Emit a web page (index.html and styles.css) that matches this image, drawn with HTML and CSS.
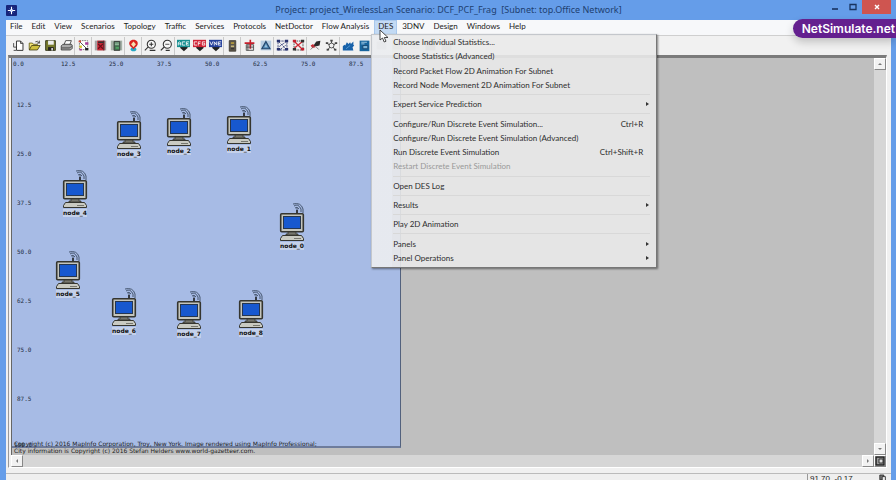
FILE: index.html
```html
<!DOCTYPE html>
<html lang="en">
<head>
<meta charset="utf-8">
<title>Project: project_WirelessLan Scenario: DCF_PCF_Frag [Subnet: top.Office Network]</title>
<link rel="stylesheet" href="styles.css">
</head>
<body>
<svg class="defs" aria-hidden="true">
  <symbol id="pc" viewBox="0 0 26 39">
    <path d="M18 11V5M16 5q2-2 4 1M15 3q4-3 7 3v3M14 1q8-2 10 5v4" fill="none" stroke="#46566f" stroke-width="1"/>
    <path d="M18 11V7" stroke="#222" stroke-width="1.5"/>
    <rect x="1.7" y="10.7" width="22.6" height="18" rx="1" fill="#c4c5bd" stroke="#35352f" stroke-width="1.6"/>
    <rect x="4.5" y="13.5" width="17" height="12" fill="#1758cf" stroke="#26364f"/>
    <path d="M9 29h8v2h2v1H7v-1h2z" fill="#77776f" stroke="#35352f" stroke-width=".8"/>
    <path d="M3.5 32.5h19l2 3v2H1.500v-2z" fill="#c9cac2" stroke="#35352f"/>
    <path d="M15 35.500h7" stroke="#77776f"/>
  </symbol>
</svg>
<div class="window">
  <header class="titlebar">
    <svg class="app-icon" viewBox="0 0 12 12"><rect width="12" height="12" rx="1" fill="#17257a"/><path d="M6 2v8M2 6h8" stroke="#fff" stroke-width="1.2"/><path d="M4 4l4 4M8 4L4 8" stroke="#9fb8f5" stroke-width=".8"/></svg>
    <h1>Project: project_WirelessLan Scenario: DCF_PCF_Frag&nbsp; [Subnet: top.Office Network]</h1>
    <div class="controls">
      <button aria-label="Minimize"><svg viewBox="0 0 10 10"><path d="M2 7h6" stroke="#18335f" stroke-width="1.600"/></svg></button>
      <button aria-label="Maximize"><svg viewBox="0 0 10 10"><path d="M2 2.500h6v5H2z" fill="none" stroke="#18335f" stroke-width="1.300"/></svg></button>
      <button class="close" aria-label="Close"><svg viewBox="0 0 10 10"><path d="M3 3l4 4M7 3L3 7" stroke="#fff" stroke-width="1.400"/></svg></button>
    </div>
  </header>

  <div class="client">
    <nav class="menubar">
      <button>File</button><button>Edit</button><button>View</button><button>Scenarios</button><button>Topology</button><button>Traffic</button><button>Services</button><button>Protocols</button><button>NetDoctor</button><button>Flow Analysis</button>
      <div class="menu-anchor">
        <button class="open" aria-expanded="true">DES</button>
        <div class="menu" role="menu">
          <button role="menuitem">Choose Individual Statistics...</button>
          <button role="menuitem">Choose Statistics (Advanced)</button>
          <button role="menuitem">Record Packet Flow 2D Animation For Subnet</button>
          <button role="menuitem">Record Node Movement 2D Animation For Subnet</button>
          <hr>
          <button role="menuitem" class="sub">Expert Service Prediction</button>
          <hr>
          <button role="menuitem">Configure/Run Discrete Event Simulation...<kbd>Ctrl+R</kbd></button>
          <button role="menuitem">Configure/Run Discrete Event Simulation (Advanced)</button>
          <button role="menuitem">Run Discrete Event Simulation<kbd>Ctrl+Shift+R</kbd></button>
          <button role="menuitem" disabled>Restart Discrete Event Simulation</button>
          <hr>
          <button role="menuitem">Open DES Log</button>
          <hr>
          <button role="menuitem" class="sub">Results</button>
          <hr>
          <button role="menuitem">Play 2D Animation</button>
          <hr>
          <button role="menuitem" class="sub">Panels</button>
          <button role="menuitem" class="sub">Panel Operations</button>
        </div>
        <svg class="cursor" viewBox="0 0 10 14"><path d="M1 1v10l2.500-2 1.700 4 1.800-.8-1.700-3.700H9z" fill="#fff" stroke="#333" stroke-width=".9"/></svg>
      </div>
      <button>3DNV</button><button>Design</button><button>Windows</button><button>Help</button>
    </nav>

    <div class="toolbar">
      <div class="group">
        <button aria-label="New"><svg viewBox="0 0 16 16"><path d="M5.500 2.500h5l3 3v8.500h-8z" fill="#fff" stroke="#333" stroke-width="1.200"/><path d="M10.500 2.500v3h3" fill="none" stroke="#333"/><path d="M2 5v5h4M2 14h3" fill="none" stroke="#333"/></svg></button>
        <button aria-label="Open"><svg viewBox="0 0 16 16"><path d="M1.500 13V5h4l1 1.500h5V8" fill="#f4e477" stroke="#5b5510"/><path d="M1.500 13.500l3-5.500h10.500l-3.500 5.500z" fill="#cfc13e" stroke="#3e3a10"/><path d="M9 3.500q3-2 5 1.500M14 2v3h-3" fill="none" stroke="#333"/></svg></button>
        <button aria-label="Save"><svg viewBox="0 0 16 16"><path d="M2 2h12v12H2z" fill="#777a2c" stroke="#25260e"/><path d="M5 2h7v5H5z" fill="#eee"/><path d="M5 10h7v4H5z" fill="#222"/><path d="M9 11h2v3H9z" fill="#ddd"/></svg></button>
        <button aria-label="Print"><svg viewBox="0 0 16 16"><path d="M5 7l2-5h7l-2 5" fill="#fff" stroke="#333"/><path d="M1.500 8.500l2-2h10.500l1 1v4l-2 2H1.500z" fill="#aaa" stroke="#333"/><path d="M2 11h10l2-2" fill="none" stroke="#333"/></svg></button>
      </div>
      <div class="group">
        <button aria-label="Object palette"><svg viewBox="0 0 16 16"><path d="M3 2h10v3M3 2v11h10V5" fill="#fff" stroke="#666" stroke-dasharray="2 1"/><path d="M3 3l10 10" stroke="#333"/><path d="M3 8h3v3H3z" fill="#d8c928"/><path d="M10 4h4v3h-4zM3 12h3v2H3z" fill="#a83c97"/><path d="M10 11h4v3h-4z" fill="#222"/><path d="M2 2h3v2H2z" fill="#d43"/></svg></button>
      </div>
      <div class="group">
        <button aria-label="Fail node"><svg viewBox="0 0 16 16"><path d="M1 2h14v12H1z" fill="#a4a4a4"/><path d="M4 2h9v12H4z" fill="#ca2634"/><path d="M5 3h7v2H5z" fill="#333"/><path d="M5 6l6 6M11 6l-6 6" stroke="#6b0d19" stroke-width="1.500"/><path d="M12 2v12" stroke="#333"/></svg></button>
        <button aria-label="Recover node"><svg viewBox="0 0 16 16"><path d="M1 2h14v12H1z" fill="#a4b0a6"/><path d="M5 3h7v11H5z" fill="#42704f" stroke="#333"/><path d="M6 5h5M6 7h5" stroke="#b9d8c0"/><path d="M7 11h4" stroke="#5de078"/></svg></button>
      </div>
      <div class="group">
        <button aria-label="Locate"><svg viewBox="0 0 16 16"><ellipse cx="8" cy="12.500" rx="3.500" ry="2.500" fill="#24a7c4"/><path d="M8 1c4 0 6 3 5 6-1 3-4 3-5 6-1-3-4-3-5-6-1-3 1-6 5-6z" fill="#d9231f"/><path d="M8 3l3 3.500L8 10 5 6.500z" fill="#f4dfb0"/></svg></button>
      </div>
      <div class="group">
        <button aria-label="Zoom in"><svg viewBox="0 0 16 16"><circle cx="9" cy="6.500" r="5" fill="#f8f8f8" stroke="#333" stroke-width="1.300"/><path d="M6.500 6.500h5M9 4v5M5 10l-4 4M7 14h7" stroke="#333" stroke-width="1.300"/></svg></button>
        <button aria-label="Zoom out"><svg viewBox="0 0 16 16"><circle cx="9" cy="6.500" r="5" fill="#f8f8f8" stroke="#333" stroke-width="1.300"/><path d="M6.500 6.500h5" stroke="#333"/><path d="M5 10l-4 4M7 14h5" stroke="#333" stroke-width="1.600"/></svg></button>
      </div>
      <div class="group">
        <button aria-label="ACE"><svg viewBox="0 0 16 16"><path d="M4 9h9v2l-4.500 4L4 11z" fill="#222"/><rect y="1" width="16" height="9" fill="#168f91"/><path d="M1.500 8V4.500l1.500-1 1.500 1V8M1.500 6h3M10 3.500H6.500v4H10M15 3.500h-3.500v4H15M11.500 5.500H14" fill="none" stroke="#fff"/></svg></button>
        <button aria-label="CFG"><svg viewBox="0 0 16 16"><path d="M4 9h9v2l-4.500 4L4 11z" fill="#222"/><rect y="1" width="16" height="9" fill="#d02336"/><path d="M5 3.500H1.500v4H5M9.500 3.500h-3V8M6.500 5.500H9M15 3.500h-3.500v4H14.500v-2H13" fill="none" stroke="#fff"/></svg></button>
        <button aria-label="VNE"><svg viewBox="0 0 16 16"><path d="M4 9h9v2l-4.500 4L4 11z" fill="#222"/><rect y="1" width="16" height="9" fill="#25409b"/><path d="M1 3l2 4.500L5 3M6.500 8V3.500l3 4V3M15 3.500h-3.500v4H15M11.500 5.500H14" fill="none" stroke="#fff"/></svg></button>
      </div>
      <div class="group">
        <button aria-label="Server"><svg viewBox="0 0 16 16"><path d="M4 2h8v13H4z" fill="#5b554a" stroke="#3b382f"/><path d="M6 4h4v2H6z" fill="#b89e3c"/><path d="M6 8h4v2H6z" fill="#c4b57a"/><path d="M6 12h4" stroke="#222"/></svg></button>
      </div>
      <div class="group">
        <button aria-label="Compare"><svg viewBox="0 0 16 16"><path d="M4 7h9v7H4z" fill="#ddd" stroke="#444"/><path d="M2 4h12v2H2zM8 1h2v11H8z" fill="#c51f2b"/><path d="M4 10h9M6 7v7" stroke="#444"/></svg></button>
        <button aria-label="Topology view"><svg viewBox="0 0 16 16"><path d="M2 2h13v12H2z" fill="#b7cce1"/><path d="M8.500 3l5 9h-10z" fill="#4d86b4" stroke="#24466b" stroke-width="1.400"/><path d="M8.500 6l2 4h-4z" fill="#9cc0dc"/></svg></button>
      </div>
      <div class="group">
        <button aria-label="Select links"><svg viewBox="0 0 16 16"><path d="M2.500 2.500h11v11h-11zM3 3l10 10M13 3L3 10M5 13l8-6" fill="none" stroke="#333f76" stroke-dasharray="3 1"/><path d="M1 1h4v3H1zM11 1h4v3h-4zM1 11h4v3H1zM11 11h4v3h-4z" fill="#28336e"/></svg></button>
        <button aria-label="Clear links"><svg viewBox="0 0 16 16"><path d="M2.500 2.500h11v11h-11z" fill="none" stroke="#333" stroke-dasharray="2 1"/><path d="M3 3l10 10M13 3L3 11" stroke="#cf2934" stroke-width="1.600"/><path d="M1 1h4v3H1zM11 11h4v3h-4z" fill="#c3202f"/><path d="M11 1h4v3h-4zM1 11h4v3H1z" fill="#333"/></svg></button>
      </div>
      <div class="group">
        <button aria-label="Flow chart"><svg viewBox="0 0 16 16"><path d="M4 10l5-7 5-1-1 6-4 1z" fill="#292929"/><path d="M2 8l3-2 3 4-4 1z" fill="#c82d35"/><path d="M2 13l4-4M9 10l3 3" stroke="#666"/></svg></button>
        <button aria-label="Network ring"><svg viewBox="0 0 16 16"><circle cx="8" cy="8" r="3" fill="#eee" stroke="#333"/><path d="M8 5V2M5 7L2 5M11 7l3-2M6 10l-3 4M10 10l3 4" stroke="#333"/><path d="M6.500 1h3v2h-3zM1 4h3v2H1zM12 4h3v2h-3zM2 12h3v2H2zM11 12h3v2h-3z" fill="#444"/></svg></button>
      </div>
      <div class="group">
        <button aria-label="Run"><svg viewBox="0 0 16 16"><path d="M1 14V9l2-2 1 1 2-4 2 2 2-2 1 2 3-3v4l1 1-2 2 1 4z" fill="#1761a9"/><path d="M5 12l5-4" stroke="#59a0d8"/></svg></button>
        <button aria-label="Results"><svg viewBox="0 0 16 16"><path d="M2 2h12v13H2z" fill="#17649c"/><path d="M4 4h7M4 6h4" stroke="#b5d6ee"/><path d="M6 8h6v4H6z" fill="#7db6da" stroke="#123d66"/></svg></button>
      </div>
      <div class="group dim">
        <button aria-label="Log"><svg viewBox="0 0 16 16"><path d="M2 3h12v10H2z" fill="#999"/></svg></button>
        <button aria-label="Pause"><svg viewBox="0 0 16 16"><path d="M2 3h12v10H2z" fill="#bbb"/></svg></button>
      </div>
      <div class="group dim">
        <button aria-label="Hide"><svg viewBox="0 0 16 16"><path d="M3 3h11v9H3z" fill="#ccc"/></svg></button>
        <button aria-label="Panels"><svg viewBox="0 0 16 16"><path d="M2 2h12v12H2z" fill="#666"/></svg></button>
        <button aria-label="Arrange"><svg viewBox="0 0 16 16"><path d="M2 2h12v12H2z" fill="#777"/></svg></button>
      </div>
    </div>

    <main class="workspace">
      <section class="canvas" aria-label="Office Network">
        <div class="subnet">
          <div class="ruler-x"><span>0.0</span><span>12.5</span><span>25.0</span><span>37.5</span><span>50.0</span><span>62.5</span><span>75.0</span><span>87.5</span></div>
          <div class="ruler-y"><span>12.5</span><span>25.0</span><span>37.5</span><span>50.0</span><span>62.5</span><span>75.0</span><span>87.5</span></div>
          <span class="ruler-end">100.0</span>
          <div class="node n0"><svg><use href="#pc"/></svg><span>node_0</span></div>
          <div class="node n1"><svg><use href="#pc"/></svg><span>node_1</span></div>
          <div class="node n2"><svg><use href="#pc"/></svg><span>node_2</span></div>
          <div class="node n3"><svg><use href="#pc"/></svg><span>node_3</span></div>
          <div class="node n4"><svg><use href="#pc"/></svg><span>node_4</span></div>
          <div class="node n5"><svg><use href="#pc"/></svg><span>node_5</span></div>
          <div class="node n6"><svg><use href="#pc"/></svg><span>node_6</span></div>
          <div class="node n7"><svg><use href="#pc"/></svg><span>node_7</span></div>
          <div class="node n8"><svg><use href="#pc"/></svg><span>node_8</span></div>
          <p class="credits">Copyright (c) 2016 MapInfo Corporation, Troy, New York. Image rendered using MapInfo Professional;<br>City information is Copyright (c) 2016 Stefan Helders www.world-gazetteer.com.</p>
        </div>
      </section>
      <div class="scroll vertical">
        <button aria-label="Scroll up"><svg viewBox="0 0 10 10"><path d="M3 6l2-2 2 2z" fill="#777"/></svg></button>
        <button aria-label="Scroll down"><svg viewBox="0 0 10 10"><path d="M3 4l2 2 2-2z" fill="#777"/></svg></button>
      </div>
      <div class="scroll horizontal">
        <button aria-label="Scroll left"><svg viewBox="0 0 10 10"><path d="M6 3L4 5l2 2z" fill="#777"/></svg></button>
        <button aria-label="Scroll right"><svg viewBox="0 0 10 10"><path d="M4 3l2 2-2 2z" fill="#777"/></svg></button>
      </div>
      <button class="corner" aria-label="Overview"><svg viewBox="0 0 10 10"><path d="M1 1h8v8H1z" fill="#999" stroke="#222" stroke-width="1.500"/><path d="M4 3h4v4H4z" fill="#ddd" stroke="#333"/></svg></button>
    </main>

    <footer class="status">
      <span class="coords">91.70, -0.17</span>
      <svg class="status-icon" viewBox="0 0 10 12"><path d="M1 1h5v6H1z" fill="#777" stroke="#222"/><path d="M4 3h4v8H4z" fill="#eee" stroke="#222"/></svg>
    </footer>
  </div>
  <a class="badge" href="#">NetSimulate.net</a>
</div>
</body>
</html>
```
FILE: styles.css
```css
* { box-sizing: border-box; }

body {
  margin: 0;
  height: 100vh;
  overflow: hidden;
  font: 8px/13px Lato, "Liberation Sans", sans-serif;
  color: #222;
}

button {
  margin: 0;
  padding: 0;
  border: 0;
  background: none;
  font: inherit;
  color: inherit;
}

svg { display: block; }

.defs { position: absolute; width: 0; height: 0; }

/* The status bar runs past the lower edge of the screen. */
.window {
  position: relative;
  display: flex;
  flex-direction: column;
  height: calc(100vh + 6px);
  padding: 0 5px 0 6px;
  background: #659de9;
}

.titlebar {
  display: grid;
  grid-template-columns: 72px 1fr 72px;
  height: 20px;
  flex: none;
}

.app-icon { width: 11px; height: 11px; align-self: center; }

.titlebar h1 {
  margin: 0;
  font: 400 9px/20px "Noto Sans", "Open Sans", sans-serif;
  text-align: center;
  white-space: nowrap;
  color: #1e3f70;
}

.controls { display: flex; justify-content: flex-end; align-items: flex-start; }
.controls button { width: 18px; height: 14px; display: grid; place-items: center; }
.controls svg { width: 10px; height: 10px; }
.controls .close { width: 29px; background: #cf5550; }

.client {
  flex: 1;
  min-height: 0;
  display: flex;
  flex-direction: column;
  background: #f0f0f0;
}

.menubar {
  display: flex;
  align-items: flex-start;
  height: 15px;
  flex: none;
  gap: 1px;
  background: #f7f8fa;
}
.menubar button { padding: 0 4px; white-space: nowrap; color: #222; }
.menubar .open { display: block; padding-bottom: 2px; background: #c3daf4; box-shadow: inset 0 0 0 1px #a9c8ec; }

.menu-anchor { position: relative; }

.menu {
  position: absolute;
  z-index: 2;
  top: 14px;
  left: -3px;
  width: 286px;
  min-height: 234px;
  padding: 0 6px 2px 0;
  display: flex;
  flex-direction: column;
  border: 1px solid;
  border-color: #c4c7cc #777 #777 #c4c7cc;
  box-shadow: 1px 1px 2px #0007;
  background: linear-gradient(90deg, #edf2fb50 0 20px, transparent 20px), #eaeaeae4;
}
.menubar .menu button {
  position: relative;
  flex: 1;
  display: flex;
  align-items: center;
  justify-content: space-between;
  padding: 0 7px 0 21px;
  line-height: 10px;
  color: #2e2e2e;
}
.menubar .menu button:disabled { color: #999; }
.menu kbd { font: inherit; }
.menu .sub::after {
  content: "";
  position: absolute;
  right: 1px;
  border: 2px solid transparent;
  border-left: 3px solid #333;
  border-right: 0;
}
.menu hr {
  flex: none;
  width: calc(100% - 21px);
  height: 1px;
  margin: 2px 0 2px 21px;
  border: 0;
  background: #d8d8d8;
}

.cursor { position: absolute; z-index: 3; left: 5px; top: 9px; width: 10px; height: 14px; }

.toolbar {
  display: flex;
  height: 20px;
  flex: none;
  align-items: center;
  padding-left: 4px;
  border-top: 1px solid #cfcfcf;
  background: #f1f1f1;
}
.group { display: flex; border-right: 1px solid #c9c9c9; }
.group button { width: 16px; height: 18px; display: grid; place-items: center; }
.group svg { width: 13px; height: 13px; }
.dim { opacity: .6; border-color: transparent; }

.workspace {
  flex: 1;
  min-height: 0;
  margin: 0 4px 0 2px;
  padding-left: 2px;
  display: grid;
  grid-template-columns: 1fr 12px;
  grid-template-rows: 1fr 12px;
  border: solid;
  border-width: 3px 1px 1px 1px;
  border-color: #7b7b7b #fff #fff #999;
}

.canvas { min-width: 0; border-left: 1px solid #666; background: #bfbfbf; }

.subnet {
  position: relative;
  width: 389px;
  height: 390px;
  border-right: 1px solid #52617d;
  border-bottom: 2px solid #6e7c9c;
  background: #a7bbe5;
  font: 6px/8px "DejaVu Sans Mono", monospace;
  color: #222b40;
}

.ruler-x { display: flex; padding: 2px 0 0 1px; }
.ruler-x span { width: 48px; }
.ruler-y {
  display: flex;
  flex-direction: column;
  gap: 41px;
  padding: 33px 0 0 5px;
}
.ruler-end { position: absolute; left: 2px; bottom: -3px; }

.node {
  position: absolute;
  width: 26px;
  display: flex;
  flex-direction: column;
  align-items: center;
}
.node svg { width: 26px; height: 39px; }
.node span {
  font: bold 6px/8px "DejaVu Sans", sans-serif;
  color: #111;
  background: #c5d1ea;
}
.n0 { left: 267px; top: 145px; }
.n1 { left: 214px; top: 48px; }
.n2 { left: 154px; top: 50px; }
.n3 { left: 104px; top: 53px; }
.n4 { left: 50px; top: 112px; }
.n5 { left: 43px; top: 193px; }
.n6 { left: 99px; top: 230px; }
.n7 { left: 164px; top: 233px; }
.n8 { left: 226px; top: 232px; }

.credits {
  position: absolute;
  left: 2px;
  top: 382px;
  margin: 0;
  white-space: nowrap;
  font: 6px/7px "DejaVu Sans", sans-serif;
  color: #222;
}

.scroll { display: flex; justify-content: space-between; background: #d6d6d6; }
.vertical { flex-direction: column; }
.scroll button, .corner {
  width: 12px;
  height: 12px;
  display: grid;
  place-items: center;
  border: 1px solid;
  border-color: #fff #888 #888 #fff;
  background: #f2f2f2;
}
.scroll svg, .corner svg { width: 10px; height: 10px; }

.status {
  flex: none;
  height: 13px;
  margin-top: 5px;
  padding-right: 4px;
  display: flex;
  justify-content: flex-end;
  border-top: 1px solid #bbb;
  background: #efefef;
}
.coords {
  width: 72px;
  padding-left: 2px;
  border-left: 1px solid #999;
  font: 8px/10px "Liberation Sans", sans-serif;
}
.status-icon { width: 8px; height: 10px; }

.badge {
  position: absolute;
  z-index: 4;
  top: 19px;
  right: 0;
  padding: 0 1px 0 9px;
  border-radius: 10px 0 0 10px;
  background: #64208f;
  box-shadow: 0 4px 8px #0003;
  font: 600 12px/19px Inter, sans-serif;
  color: #fff;
  text-decoration: none;
}
```
